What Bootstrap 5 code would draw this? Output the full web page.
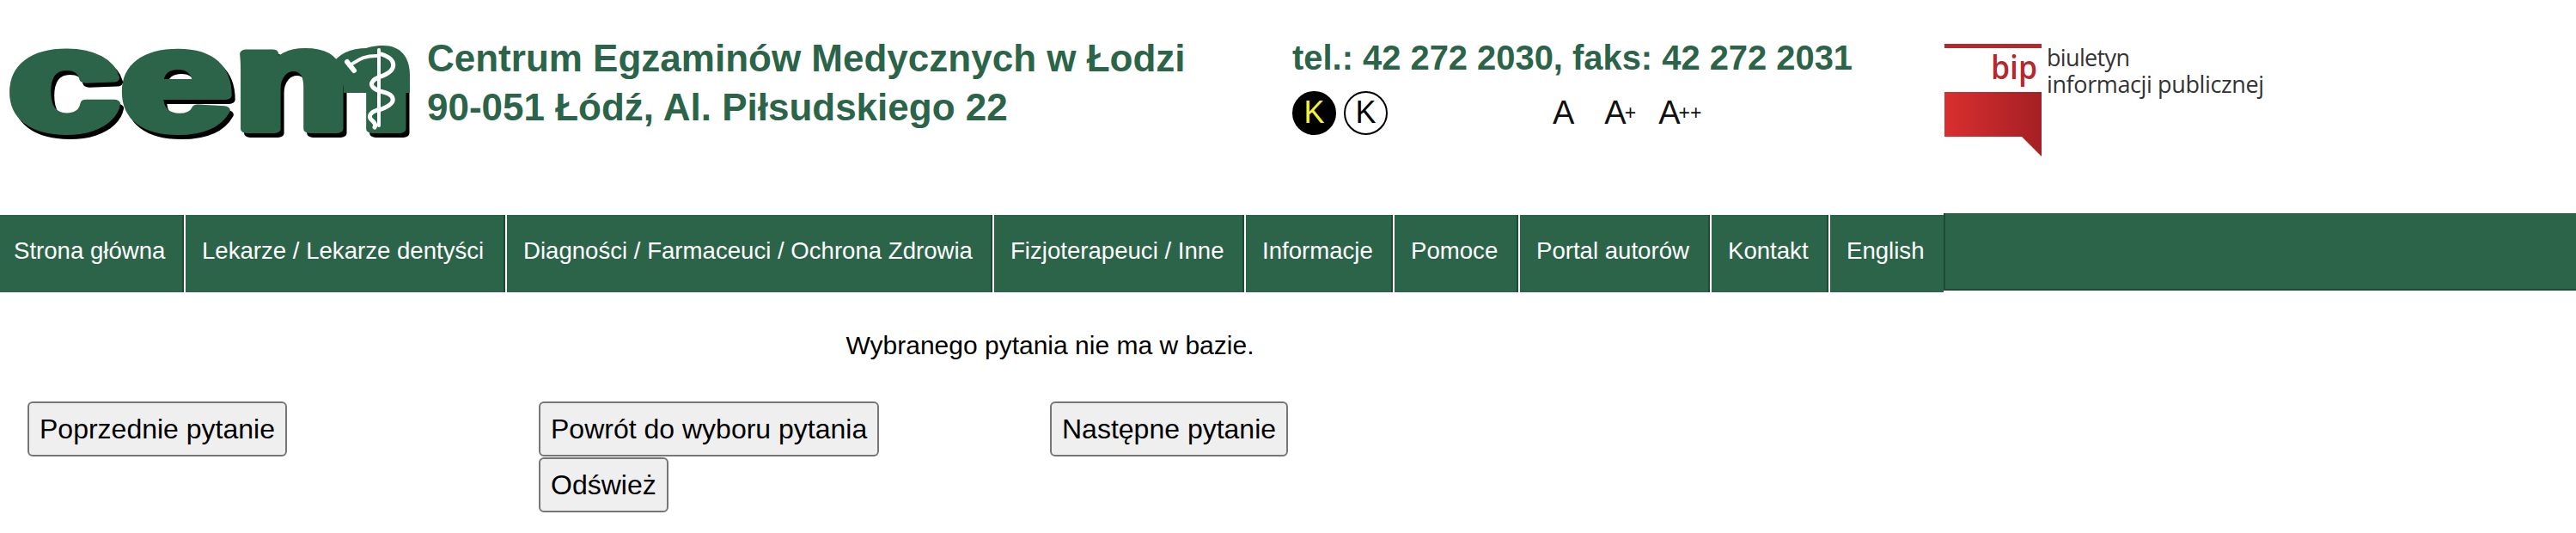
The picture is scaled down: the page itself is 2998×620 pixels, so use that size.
<!DOCTYPE html>
<html lang="pl">
<head>
    <meta charset="UTF-8">
    <title>Centrum Egzaminów Medycznych</title>
    <link rel="stylesheet" href="https://cdn.jsdelivr.net/npm/bootstrap@5.3.2/dist/css/bootstrap.min.css">
    <style>
        body { font-family: "Liberation Sans", Arial, sans-serif; color: #000; background: #fff; }
        .head-row { height: 248px; }
        .logo-col { width: 497px; padding-left: 8px; }
        .logo-word { filter: drop-shadow(4px 5px 0 #000); }
        .title-col { width: 1007px; padding-top: 39px; }
        .tel-col { width: 759px; padding-top: 39px; }
        .head-text { color: #2c6449; font-size: 44px; line-height: 57px; font-weight: 700; }
        .tel-text { font-size: 39.9px; }
        .contrast-row { margin-top: 9px; height: 52px; }
        .k-btn { width: 51px; height: 51px; border-radius: 50%; border: 2px solid #000; font-size: 36px; line-height: 1; margin-right: 9px; }
        .k-on { background: #000; color: #f4f03c; }
        .k-off { background: #fff; color: #000; }
        .size-links { margin-left: 183px; color: #111; font-size: 38px; gap: 26px; line-height: 1; }
        .size-links span:first-child { margin-right: 9px; }
        .size-links small { font-size: 23px; margin-left: -2px; vertical-align: 5px; }
        .bip-col { padding-top: 21px; }
        .menu-bar { height: 92px; }
        .menu-item { height: 90px; background: #2c6449; color: #fff; font-size: 27.6px; line-height: 84px; padding-left: 19px; border-left: 2px solid #fff; box-shadow: -2px 0 0 #1d4a35; white-space: nowrap; text-decoration: none; }
        .menu-item:first-child { border-left: 0; padding-left: 16px; box-shadow: none; }
        .menu-fill { height: 90px; flex-grow: 1; background: #2c6449; border-left: 2px solid #1d4a35; border-bottom: 2px solid #1d4a35; }
        .m1 { width: 214px; } .m2 { width: 374px; } .m3 { width: 567px; } .m4 { width: 293px; } .m5 { width: 173px; }
        .m6 { width: 146px; } .m7 { width: 223px; } .m8 { width: 138px; } .m9 { width: 134px; }
        .answer-msg { width: 2444px; text-align: center; font-size: 30px; line-height: 36px; margin-top: 44px; }
        .btn-area { padding-left: 32px; margin-top: 47px; }
        .btn-col { width: 595px; }
        .grey-btn { display: block; height: 64px; background: #efefef; border: 2px solid #767676; border-radius: 6px; color: #000; font-family: "Liberation Sans", Arial, sans-serif; font-size: 32px; padding: 0 12px; white-space: nowrap; }
        .grey-btn + .grey-btn { margin-top: 1px; }
    </style>
</head>
<body>
    <div class="d-flex head-row">
        <div class="logo-col">
            <svg width="480" height="190" viewBox="0 0 480 190">
                <text class="logo-word" x="1" y="150" textLength="471" lengthAdjust="spacingAndGlyphs" font-family="Liberation Sans" font-weight="700" font-size="165" stroke-width="10" stroke-linejoin="round" fill="#2c6449" stroke="#2c6449">cem</text>
                <g transform="translate(0 48)">
                    <!-- tarcza pod laską, bez niej brzuszek litery jest za niski -->
                    <path d="M392 34C398 14 416 5 438 5C458 5 469 18 469 40V60H392Z" fill="#2c6449"/>
                    <g fill="none" stroke="#fff" stroke-linecap="round">
                        <path d="M433 10V98" stroke-width="4"/>
                        <path d="M398 28c8-2 12-12 35-11" stroke-width="4"/>
                        <path d="M396 24l8 10" stroke-width="6"/>
                        <path d="M436 15c18 6 18 18 2 25c-14 4-20 12-4 18c20 4 20 14 2 21c-12 2-18 8-10 14c2 2 4 4 2 7" stroke-width="5"/>
                    </g>
                </g>
            </svg>
        </div>
        <div class="title-col head-text">
            <div>Centrum Egzaminów Medycznych w Łodzi</div>
            <div>90-051 Łódź, Al. Piłsudskiego 22</div>
        </div>
        <div class="tel-col">
            <div class="head-text tel-text">tel.: 42 272 2030, faks: 42 272 2031</div>
            <div class="d-flex align-items-center contrast-row">
                <span class="k-btn k-on d-flex align-items-center justify-content-center">K</span>
                <span class="k-btn k-off d-flex align-items-center justify-content-center">K</span>
                <div class="d-flex align-items-baseline size-links">
                    <span>A</span>
                    <span>A<small>+</small></span>
                    <span>A<small>++</small></span>
                </div>
            </div>
        </div>
        <div class="bip-col">
            <svg width="400" height="170" viewBox="0 0 400 170">
                <defs>
                    <linearGradient id="bipRed" x1="0" x2="1" y1="0" y2="0">
                        <stop offset="0" stop-color="#d92f2f"/>
                        <stop offset="1" stop-color="#a51f24"/>
                    </linearGradient>
                </defs>
                <rect x="0" y="30" width="113" height="5" fill="#b5282d"/>
                <path d="M0 86H113V161L90 138H0Z" fill="url(#bipRed)"/>
                <text x="54" y="71" font-family="Open Sans" font-weight="600" font-size="37" textLength="54" lengthAdjust="spacingAndGlyphs" fill="#b5282d">bip</text>
                <g font-family="Open Sans" font-size="27" fill="#333">
                    <text x="119" y="56" textLength="97" lengthAdjust="spacing">biuletyn</text>
                    <text x="119" y="87" textLength="253" lengthAdjust="spacing">informacji publicznej</text>
                </g>
            </svg>
        </div>
    </div>

    <div class="d-flex align-items-end menu-bar">
        <a class="menu-item m1">Strona główna</a>
        <a class="menu-item m2">Lekarze / Lekarze dentyści</a>
        <a class="menu-item m3">Diagności / Farmaceuci / Ochrona Zdrowia</a>
        <a class="menu-item m4">Fizjoterapeuci / Inne</a>
        <a class="menu-item m5">Informacje</a>
        <a class="menu-item m6">Pomoce</a>
        <a class="menu-item m7">Portal autorów</a>
        <a class="menu-item m8">Kontakt</a>
        <a class="menu-item m9">English</a>
        <div class="menu-fill align-self-start"></div>
    </div>

    <div class="answer-msg">Wybranego pytania nie ma w bazie.</div>

    <div class="d-flex btn-area">
        <div class="btn-col"><button class="grey-btn">Poprzednie pytanie</button></div>
        <div class="btn-col">
            <button class="grey-btn">Powrót do wyboru pytania</button>
            <button class="grey-btn">Odśwież</button>
        </div>
        <div class="btn-col"><button class="grey-btn">Następne pytanie</button></div>
    </div>

    <script src="https://cdn.jsdelivr.net/npm/bootstrap@5.3.2/dist/js/bootstrap.bundle.min.js"></script>
</body>
</html>
